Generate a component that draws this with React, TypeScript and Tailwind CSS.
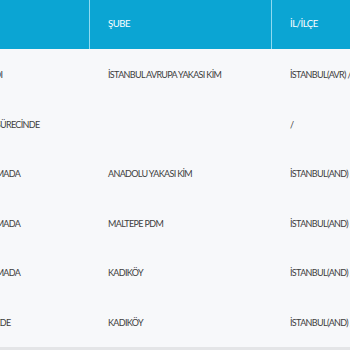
import React from 'react';

type Row = {
  durum: string;
  sube: string;
  ilce: string;
};

const rows: Row[] = [
  {durum: 'KAPATILDI', sube: 'İSTANBUL AVRUPA YAKASI KİM', ilce: 'İSTANBUL(AVR) / BEYOĞLU'},
  {durum: 'ÇÖZÜM SÜRECİNDE', sube: '', ilce: '/'},
  {durum: 'ARAŞTIRMADA', sube: 'ANADOLU YAKASI KİM', ilce: 'İSTANBUL(AND) / KADIKÖY'},
  {durum: 'ARAŞTIRMADA', sube: 'MALTEPE PDM', ilce: 'İSTANBUL(AND) / MALTEPE'},
  {durum: 'ARAŞTIRMADA', sube: 'KADIKÖY', ilce: 'İSTANBUL(AND) / KADIKÖY'},
  {durum: 'BEKLEMEDE', sube: 'KADIKÖY', ilce: 'İSTANBUL(AND) / KADIKÖY'},
];

const cols = 'grid grid-cols-[144px_182px_160px]';

export default function App() {
  return (
    <div className="relative w-[350px] h-[350px] overflow-hidden bg-[#f7f8fa] font-['Lato',sans-serif]">
      <div className="-ml-[54px] w-[486px]">
        <div className={`${cols} h-[49px] bg-[#0ba5d3] text-white text-[9.6px] tracking-[-0.5px]`}>
          <div className="flex items-center px-[18px] border-r border-[#8fdaf0]">DURUM</div>
          <div className="flex items-center px-[18px] border-r border-[#8fdaf0]">ŞUBE</div>
          <div className="flex items-center px-[18px]">İL/İLÇE</div>
        </div>
        {rows.map((row, i) => (
          <div key={i} className={`${cols} h-[49.6px] pt-[2px] text-[#3d3d3d] text-[9px] tracking-[-0.65px]`}>
            <div className="flex items-center px-[18px] whitespace-nowrap overflow-hidden">{row.durum}</div>
            <div className="flex items-center px-[18px] whitespace-nowrap">{row.sube}</div>
            <div className="flex items-center px-[18px] whitespace-nowrap">{row.ilce}</div>
          </div>
        ))}
      </div>
      {/* horizontal scroll track */}
      <div className="absolute left-0 right-0 bottom-0 h-[3px] bg-[#e4e5e7]" />
    </div>
  );
}
